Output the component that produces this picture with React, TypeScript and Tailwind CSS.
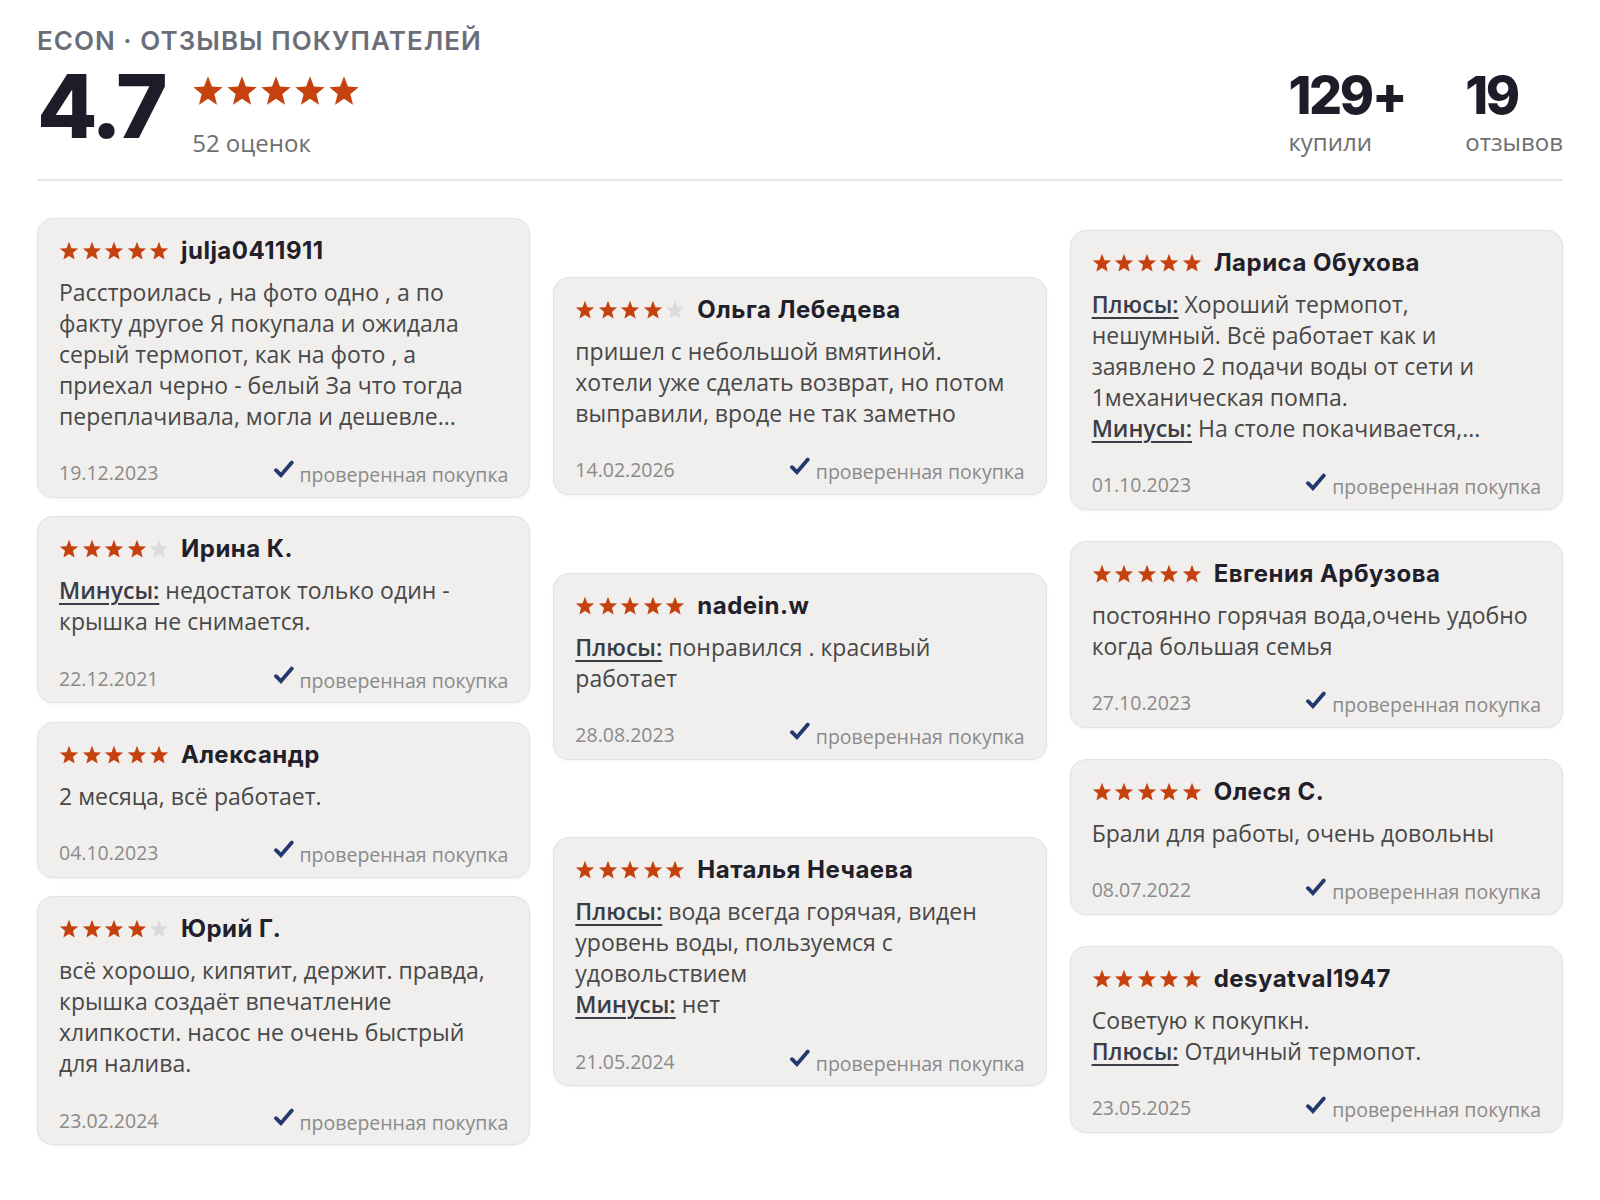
import type { ReactNode } from 'react'

// ─── data ───────────────────────────────────────────────────────────
type Part = { label?: 'Плюсы' | 'Минусы'; text: string }

interface Review {
  name: string
  rating: number
  parts: Part[]
  date: string
}

const COLUMNS: Review[][] = [
  [
    {
      name: 'julja0411911',
      rating: 5,
      parts: [{ text: 'Расстроилась , на фото одно , а по факту другое Я покупала и ожидала серый термопот, как на фото , а приехал черно - белый За что тогда переплачивала, могла и дешевле...' }],
      date: '19.12.2023',
    },
    {
      name: 'Ирина К.',
      rating: 4,
      parts: [{ label: 'Минусы', text: 'недостаток только один - крышка не снимается.' }],
      date: '22.12.2021',
    },
    {
      name: 'Александр',
      rating: 5,
      parts: [{ text: '2 месяца, всё работает.' }],
      date: '04.10.2023',
    },
    {
      name: 'Юрий Г.',
      rating: 4,
      parts: [{ text: 'всё хорошо, кипятит, держит. правда, крышка создаёт впечатление хлипкости. насос не очень быстрый для налива.' }],
      date: '23.02.2024',
    },
  ],
  [
    {
      name: 'Ольга Лебедева',
      rating: 4,
      parts: [{ text: 'пришел с небольшой вмятиной. хотели уже сделать возврат, но потом выправили, вроде не так заметно' }],
      date: '14.02.2026',
    },
    {
      name: 'nadein.w',
      rating: 5,
      parts: [{ label: 'Плюсы', text: 'понравился . красивый работает' }],
      date: '28.08.2023',
    },
    {
      name: 'Наталья Нечаева',
      rating: 5,
      parts: [
        { label: 'Плюсы', text: 'вода всегда горячая, виден уровень воды, пользуемся с удовольствием' },
        { label: 'Минусы', text: 'нет' },
      ],
      date: '21.05.2024',
    },
  ],
  [
    {
      name: 'Лариса Обухова',
      rating: 5,
      parts: [
        { label: 'Плюсы', text: 'Хороший термопот, нешумный. Всё работает как и заявлено 2 подачи воды от сети и 1механическая помпа.' },
        { label: 'Минусы', text: 'На столе покачивается,...' },
      ],
      date: '01.10.2023',
    },
    {
      name: 'Евгения Арбузова',
      rating: 5,
      parts: [{ text: 'постоянно горячая вода,очень удобно когда большая семья' }],
      date: '27.10.2023',
    },
    {
      name: 'Олеся С.',
      rating: 5,
      parts: [{ text: 'Брали для работы, очень довольны' }],
      date: '08.07.2022',
    },
    {
      name: 'desyatval1947',
      rating: 5,
      parts: [
        { text: 'Советую к покупкн.' },
        { label: 'Плюсы', text: 'Отдичный термопот.' },
      ],
      date: '23.05.2025',
    },
  ],
]

// ─── icons ──────────────────────────────────────────────────────────
function Star({ filled, size }: { filled: boolean; size: number }) {
  return (
    <svg width={size} height={size} viewBox="0 0 24 24" className="shrink-0">
      <polygon
        points="12,1 14.95,8.55 23,9.1 16.8,14.2 18.75,22.3 12,17.85 5.25,22.3 7.2,14.2 1,9.1 9.05,8.55"
        fill={filled ? '#c5420f' : '#dcdbd9'}
      />
    </svg>
  )
}

function Stars({ rating, size, gap }: { rating: number; size: number; gap: string }) {
  return (
    <div className={`flex items-center ${gap}`}>
      {[1, 2, 3, 4, 5].map(i => (
        <Star key={i} filled={i <= rating} size={size} />
      ))}
    </div>
  )
}

function Check() {
  return (
    <svg width="21" height="19" viewBox="0 0 21 19" className="-mt-[6px] shrink-0">
      <path d="M3 10.2 L7.9 15.2 L18.8 2.6" fill="none" stroke="#23386e" strokeWidth="3.8" strokeLinecap="round" strokeLinejoin="miter" />
    </svg>
  )
}

// ─── pieces ─────────────────────────────────────────────────────────
function Label({ children }: { children: ReactNode }) {
  return (
    <span className="mr-[6px] font-semibold text-[#3b3d46] underline decoration-2 underline-offset-[4px]">
      {children}
    </span>
  )
}

function ReviewCard({ r }: { r: Review }) {
  return (
    <div className="rounded-[16px] border border-[#e3e2df] bg-[#f0efed] px-[21px] pt-[15px] pb-[11px] shadow-[0_1px_3px_rgba(0,0,0,0.06)]">
      <div className="flex h-[34px] items-center">
        <Stars rating={r.rating} size={20} gap="gap-[2.5px]" />
        <span className="ml-[12px] font-['Inter'] text-[24px] font-bold tracking-[0.02em] text-[#1f2029]">
          {r.name}
        </span>
      </div>
      <div className="mt-[9px] pr-[7px] font-['Open_Sans'] text-[23px] leading-[31px] text-[#484848]">
        {r.parts.map((p, i) => (
          <p key={i}>
            {p.label && <Label>{p.label}:</Label>}
            {p.text}
          </p>
        ))}
      </div>
      <div className="mt-[28px] flex h-[26px] items-center justify-between font-['Open_Sans'] text-[19.5px] text-[#8a8a8a]">
        <span>{r.date}</span>
        <span className="flex items-center gap-[6px]">
          <Check />
          <span className="pt-[4px]">проверенная покупка</span>
        </span>
      </div>
    </div>
  )
}

function Stat({ value, label }: { value: string; label: string }) {
  return (
    <div className="flex flex-col">
      <span className="font-['Inter'] text-[52px] font-extrabold leading-[60px] tracking-[-0.045em] text-[#1c1d29]">
        {value}
      </span>
      <span className="mt-[1px] font-['Open_Sans'] text-[24px] leading-[30px] text-[#6e6e6e]">
        {label}
      </span>
    </div>
  )
}

// ─── page ───────────────────────────────────────────────────────────
export default function App() {
  return (
    <div className="min-h-[1200px] bg-white px-[37px]">
      <header className="flex items-start justify-between border-b-2 border-[#e6e6e6] pb-[20px]">
        <div className="pt-[27px]">
          <h1 className="font-['Inter'] text-[26px] font-semibold uppercase leading-[28px] tracking-[0.04em] text-[#6b6e78]">
            ECON · Отзывы покупателей
          </h1>
          <div className="mt-[7px] flex items-start">
            <span className="font-['Inter'] text-[88px] font-extrabold leading-[88px] tracking-[-0.04em] text-[#1c1d29]">
              4.7
            </span>
            <div className="ml-[28px] flex flex-col pt-[13px]">
              <Stars rating={5} size={32} gap="gap-[2px]" />
              <span className="mt-[19px] font-['Open_Sans'] text-[24px] leading-[33px] text-[#6e6e6e]">52 оценок</span>
            </div>
          </div>
        </div>
        <div className="flex gap-[60px] pt-[66px]">
          <Stat value="129+" label="купили" />
          <Stat value="19" label="отзывов" />
        </div>
      </header>

      <main className="mt-[18px] grid h-[965px] grid-cols-3 gap-x-[23px]">
        {COLUMNS.map((col, i) => (
          <div key={i} className="flex flex-col justify-evenly">
            {col.map(r => (
              <ReviewCard key={r.name} r={r} />
            ))}
          </div>
        ))}
      </main>
    </div>
  )
}
